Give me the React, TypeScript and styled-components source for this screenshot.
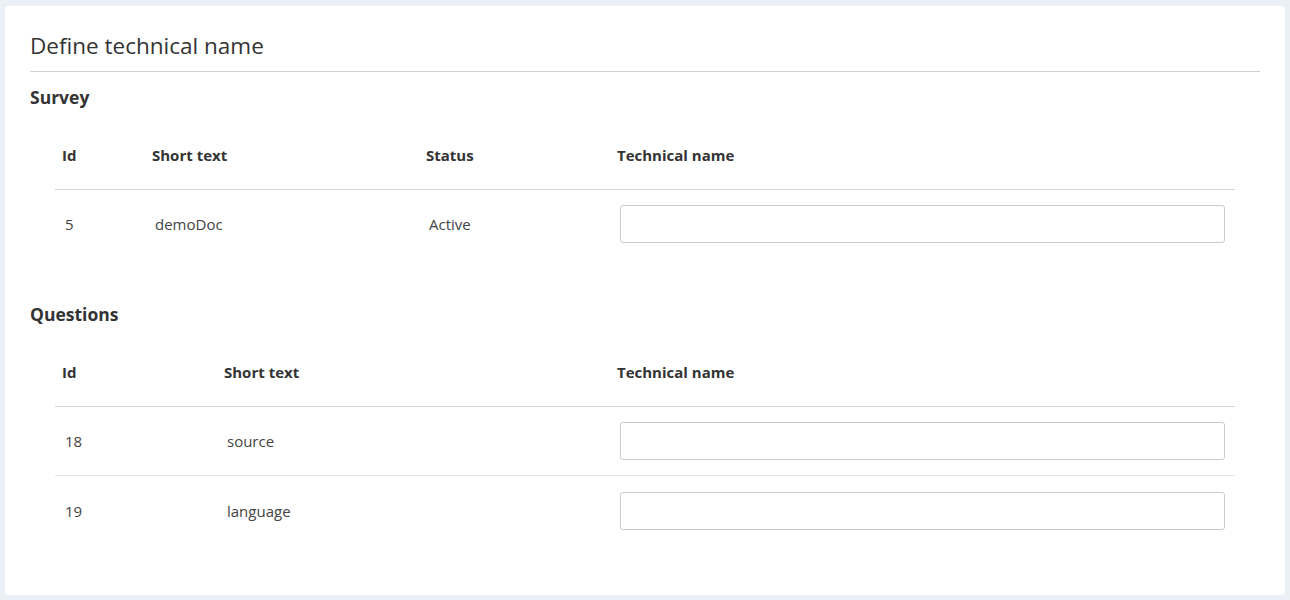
import React from 'react'
import styled, { createGlobalStyle } from 'styled-components'

const GlobalStyle = createGlobalStyle`
    body {
        margin : 0;
        background : #ebeff6;
        font-family : "Open Sans", "Noto Sans", sans-serif;
        color : #333;
    }
`

const Page = styled.div`
    padding : 6px 5px 5px;
`

const Card = styled.div`
    background : #fff;
    border-radius : 3px;
    padding : 25px 25px 50px;
`

const Title = styled.h1`
    margin : 0;
    font-size : 22.5px;
    font-weight : 400;
    line-height : 30px;
    padding-bottom : 10px;
    border-bottom : 1px solid #cfcfcf;
    color : #333;
`

const SectionTitle = styled.h2<{ $top: number }>`
    margin : ${p => p.$top}px 0 13px;
    font-size : 17.5px;
    font-weight : 700;
    line-height : 22px;
    color : #333;
`

const Table = styled.table`
    margin : 0 25px;
    width : calc(100% - 50px);
    border-collapse : collapse;
    table-layout : fixed;
`

const HeadCell = styled.th<{ $w?: number }>`
    width : ${p => (p.$w ? `${p.$w}px` : 'auto')};
    height : 68px;
    padding : 0 7px;
    text-align : left;
    font-size : 15px;
    font-weight : 700;
    color : #333;
    border-bottom : 1px solid #d4d4d4;
`

const Row = styled.tr`
    & + & td {
        border-top : 1px solid #e6e6e6;
        padding-top : 1px;
    }
`

const Cell = styled.td`
    height : 68px;
    padding : 0 10px;
    font-size : 15px;
    color : #444;
`

const NameInput = styled.input`
    display : block;
    box-sizing : border-box;
    width : 100%;
    height : 38px;
    border : 1px solid #cccccc;
    border-radius : 3px;
    font-family : inherit;
    font-size : 14px;
    padding : 0 10px;
    outline : none;
`

const survey = [{ id: 5, text: 'demoDoc', status: 'Active' }]
const questions = [
    { id: 18, text: 'source' },
    { id: 19, text: 'language' },
]

function App() {
    return (
        <Page>
            <GlobalStyle />
            <Card>
                <Title>Define technical name</Title>
                <SectionTitle $top={14}>Survey</SectionTitle>
                <Table>
                    <thead>
                        <tr>
                            <HeadCell $w={76}>Id</HeadCell>
                            <HeadCell $w={260}>Short text</HeadCell>
                            <HeadCell $w={177}>Status</HeadCell>
                            <HeadCell>Technical name</HeadCell>
                        </tr>
                    </thead>
                    <tbody>
                        {survey.map(s => (
                            <Row key={s.id}>
                                <Cell>{s.id}</Cell>
                                <Cell>{s.text}</Cell>
                                <Cell>{s.status}</Cell>
                                <Cell><NameInput type="text" /></Cell>
                            </Row>
                        ))}
                    </tbody>
                </Table>
                <SectionTitle $top={45}>Questions</SectionTitle>
                <Table>
                    <thead>
                        <tr>
                            <HeadCell $w={148}>Id</HeadCell>
                            <HeadCell $w={379}>Short text</HeadCell>
                            <HeadCell>Technical name</HeadCell>
                        </tr>
                    </thead>
                    <tbody>
                        {questions.map(q => (
                            <Row key={q.id}>
                                <Cell>{q.id}</Cell>
                                <Cell>{q.text}</Cell>
                                <Cell><NameInput type="text" /></Cell>
                            </Row>
                        ))}
                    </tbody>
                </Table>
            </Card>
        </Page>
    )
}

export default App
